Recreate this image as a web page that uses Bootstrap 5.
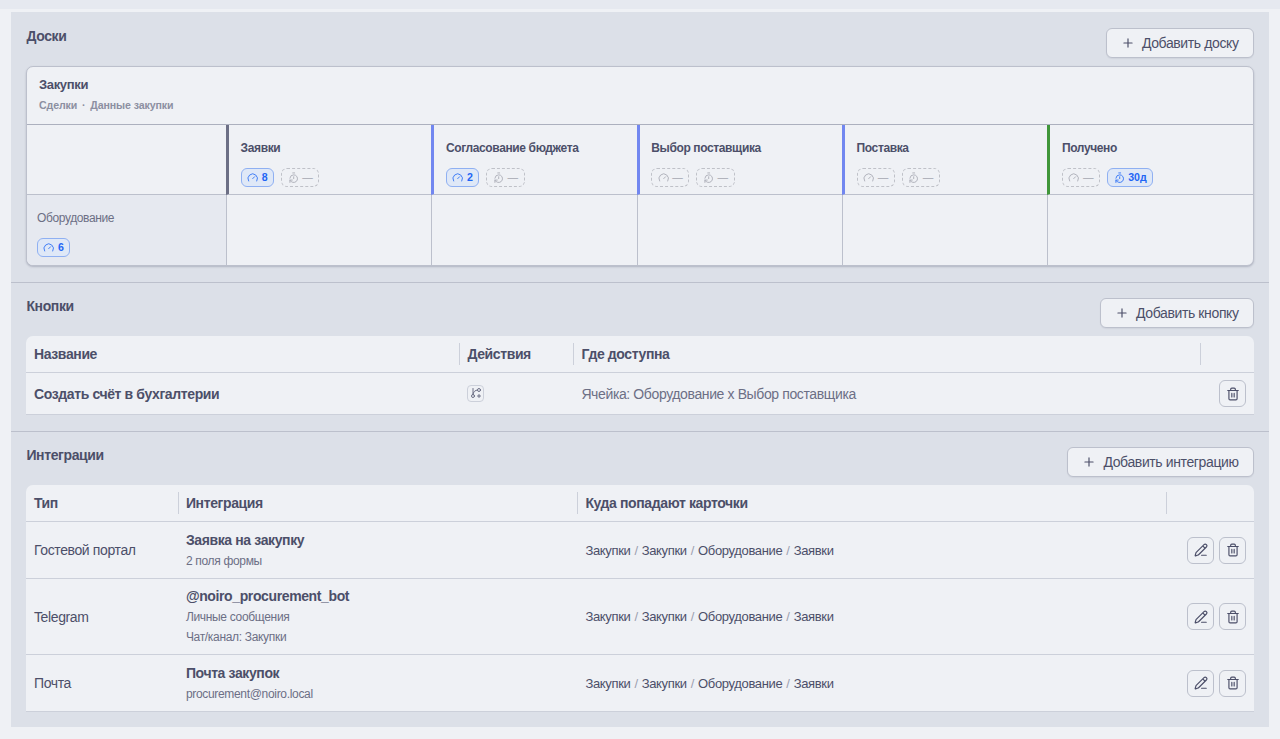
<!DOCTYPE html>
<html lang="ru">
<head>
<meta charset="utf-8">
<meta name="viewport" content="width=device-width, initial-scale=1">
<title>Процесс закупок</title>
<link href="https://cdn.jsdelivr.net/npm/bootstrap@5.3.0/dist/css/bootstrap.min.css" rel="stylesheet">
<style>
:root{--base:#eff1f5;--mantle:#e6e9f0;--crust:#dce0e8;--ink:#4c4f69;--sub:#6c6f85;--dim:#8c8fa1;--line:#bcc0cc;--blue:#1e66f5}
body{background:var(--base);color:var(--ink);font-family:"Liberation Sans",Arial,sans-serif;font-size:14px;letter-spacing:-.38px;line-height:20px;overflow:hidden}
svg{fill:none;stroke:currentColor;stroke-width:2;stroke-linecap:round;stroke-linejoin:round;flex:none;display:block}
.topstrip{height:9px;background:var(--mantle);margin-bottom:3px}
.panel{margin:0 11px;background:var(--crust)}
.block{padding:15px 15.4px 16px;border-bottom:1px solid var(--line)}
.block:first-child{padding-top:16px}
.block:last-child{border-bottom:0;padding-bottom:15px}
.block-head{height:30px;margin-bottom:8px}
.block-head h2{font-size:14px;line-height:16px;font-weight:700;margin:0}
.btn-add{--bs-btn-color:var(--ink);--bs-btn-bg:var(--base);--bs-btn-border-color:var(--line);--bs-btn-line-height:20px;--bs-btn-padding-x:14px;--bs-btn-padding-y:0;--bs-btn-border-radius:6px;--bs-btn-font-size:14px;letter-spacing:-.38px;height:30px;gap:7px;box-shadow:0 1px 1px rgba(76,79,105,.08)}
.board{height:200px;border:1px solid var(--line);border-radius:7px;background:var(--base);box-shadow:0 1px 2px rgba(76,79,105,.3);overflow:hidden}
.board-head{height:57px;padding:8px 11.6px 0;font-weight:700}
.board-head .t1{font-size:13px;letter-spacing:-.33px;line-height:20px}
.board-head .t2{font-size:10.6px;letter-spacing:-.1px;line-height:21px;color:var(--dim);gap:4.8px}
.stages{display:grid;grid-template-columns:198.6px repeat(5,1fr);grid-template-rows:70px 70px;border-top:1px solid #acb0be}
.stages>div{border-left:1px solid var(--line);padding:14px 0 0 9.6px;font-size:12px;letter-spacing:-.37px;line-height:18px}
.stages>div:nth-child(-n+6){border-bottom:1px solid var(--line)}
.stages>.stg{border-left:3px solid var(--c);padding-left:11.6px;font-weight:700}
.stages>.corner{border-left:0}
.stages>.lane{background:var(--mantle);color:var(--sub);border-left:0}
.chips{gap:7px;margin-top:11px;letter-spacing:0}
.chip{height:19px;border:1px solid #8fb0f2;border-radius:6px;background:#dfe8f7;color:var(--blue);font-size:10.6px;line-height:17px;font-weight:700;padding:0 5.5px;gap:3.2px}
.chip svg{width:11.4px;height:11.4px;opacity:.85}
.chip.off{border:1px dashed #bfc1c8;background:transparent;color:#a3a5b0;font-weight:400}
.grid-table{table-layout:fixed;width:100%;background:var(--base);border-radius:7px 7px 0 0;border-collapse:separate;border-spacing:0}
.grid-table th,.grid-table td{padding:0 7.6px 0 8px;border-bottom:1px solid #ccd0da;vertical-align:middle}
.grid-table th:first-child,.grid-table td:first-child{padding-left:7.6px}
.grid-table th{height:37px;font-weight:700;line-height:20px;background:linear-gradient(#ccd0da,#ccd0da) no-repeat left 7px/1px 22px}
.grid-table th:first-child{background:none}
.bt td{height:42px}
.btn-act{width:27px;height:27px;border:1px solid var(--line);border-radius:6px;background:transparent;color:var(--ink);padding:0}
.flow-ico{width:17px;height:17px;border:1px solid #ccd0da;border-radius:4px;color:var(--sub);margin-top:-1px}
.acts{gap:5px}
.lead-line{font-weight:700;line-height:21px}
.note{font-size:12px;letter-spacing:-.32px;line-height:20px;color:var(--sub)}
.way{font-size:13px;letter-spacing:-.34px;gap:4px;padding-top:1px}
.way i{font-style:normal;color:#9ca0b0}
</style>
</head>
<body>
<svg width="0" height="0" class="position-absolute">
<symbol id="plus" viewBox="0 0 24 24"><path d="M12 5v14M5 12h14"/></symbol>
<symbol id="gauge" viewBox="0 0 24 24"><path d="M12 14l4-4M3.340 19a10 10 0 1 1 17.320 0"/></symbol>
<symbol id="timer" viewBox="0 0 24 24"><path d="M10 2h4M12 14v-4M4 13a8 8 0 0 1 8-7 8 8 0 1 1-5.300 14L4 17.600M9 17H4v5"/></symbol>
<symbol id="trash" viewBox="0 0 24 24"><path d="M3 6h18M19 6v14c0 1-1 2-2 2H7c-1 0-2-1-2-2V6M8 6V4c0-1 1-2 2-2h4c1 0 2 1 2 2v2M10 11v6M14 11v6"/></symbol>
<symbol id="pen" viewBox="0 0 24 24"><path d="M13 21h8M15 5l4 4M21.174 6.812a1 1 0 0 0-3.986-3.987L3.842 16.174a2 2 0 0 0-.5.83l-1.321 4.352a.5.5 0 0 0 .623.622l4.353-1.320a2 2 0 0 0 .83-.497z"/></symbol>
<symbol id="flow" viewBox="0 0 24 24"><path d="M6 3v12M15 6a9 9 0 0 0-9 9M18 15v6M21 18h-6"/><circle cx="6" cy="18" r="3"/><circle cx="18" cy="6" r="3"/></symbol>
</svg>
<div class="topstrip"></div>
<main class="panel">
<section class="block">
<div class="block-head d-flex justify-content-between align-items-start"><h2>Доски</h2>
<button class="btn btn-add d-flex align-items-center"><svg width="14" height="14"><use href="#plus"/></svg>Добавить доску</button></div>
<div class="board">
<div class="board-head"><div class="t1">Закупки</div><div class="t2 d-flex"><span>Сделки</span><span>·</span><span>Данные закупки</span></div></div>
<div class="stages">
<div class="corner"></div>
<div class="stg" style="--c:#6c6f85">Заявки<div class="chips d-flex"><span class="chip d-flex align-items-center"><svg><use href="#gauge"/></svg>8</span><span class="chip off d-flex align-items-center"><svg><use href="#timer"/></svg>—</span></div></div>
<div class="stg" style="--c:#7287f0">Согласование бюджета<div class="chips d-flex"><span class="chip d-flex align-items-center"><svg><use href="#gauge"/></svg>2</span><span class="chip off d-flex align-items-center"><svg><use href="#timer"/></svg>—</span></div></div>
<div class="stg" style="--c:#7287f0">Выбор поставщика<div class="chips d-flex"><span class="chip off d-flex align-items-center"><svg><use href="#gauge"/></svg>—</span><span class="chip off d-flex align-items-center"><svg><use href="#timer"/></svg>—</span></div></div>
<div class="stg" style="--c:#7287f0">Поставка<div class="chips d-flex"><span class="chip off d-flex align-items-center"><svg><use href="#gauge"/></svg>—</span><span class="chip off d-flex align-items-center"><svg><use href="#timer"/></svg>—</span></div></div>
<div class="stg" style="--c:#40963a">Получено<div class="chips d-flex"><span class="chip off d-flex align-items-center"><svg><use href="#gauge"/></svg>—</span><span class="chip d-flex align-items-center"><svg><use href="#timer"/></svg>30д</span></div></div>
<div class="lane">Оборудование<div class="chips d-flex"><span class="chip d-flex align-items-center"><svg><use href="#gauge"/></svg>6</span></div></div>
<div></div><div></div><div></div><div></div><div></div>
</div>
</div>
</section>
<section class="block">
<div class="block-head d-flex justify-content-between align-items-start"><h2>Кнопки</h2>
<button class="btn btn-add d-flex align-items-center"><svg width="14" height="14"><use href="#plus"/></svg>Добавить кнопку</button></div>
<table class="grid-table bt">
<colgroup><col style="width:433px"><col style="width:114px"><col><col style="width:54px"></colgroup>
<tr><th>Название</th><th>Действия</th><th>Где доступна</th><th></th></tr>
<tr><td class="fw-bold">Создать счёт в бухгалтерии</td><td><span class="flow-ico d-flex align-items-center justify-content-center"><svg width="12" height="12"><use href="#flow"/></svg></span></td><td style="color:var(--sub)">Ячейка: Оборудование x Выбор поставщика</td><td><div class="acts d-flex justify-content-end"><button class="btn-act d-flex align-items-center justify-content-center" aria-label="Удалить"><svg width="14" height="14"><use href="#trash"/></svg></button></div></td></tr>
</table>
</section>
<section class="block">
<div class="block-head d-flex justify-content-between align-items-start"><h2>Интеграции</h2>
<button class="btn btn-add d-flex align-items-center"><svg width="14" height="14"><use href="#plus"/></svg>Добавить интеграцию</button></div>
<table class="grid-table">
<colgroup><col style="width:151.500px"><col style="width:399.500px"><col><col style="width:88px"></colgroup>
<tr><th>Тип</th><th>Интеграция</th><th>Куда попадают карточки</th><th></th></tr>
<tr style="height:57px"><td>Гостевой портал</td><td><div class="lead-line">Заявка на закупку</div><div class="note">2 поля формы</div></td><td><div class="way d-flex"><span>Закупки</span><i>/</i><span>Закупки</span><i>/</i><span>Оборудование</span><i>/</i><span>Заявки</span></div></td><td><div class="acts d-flex justify-content-end"><button class="btn-act d-flex align-items-center justify-content-center" aria-label="Изменить"><svg width="14" height="14"><use href="#pen"/></svg></button><button class="btn-act d-flex align-items-center justify-content-center" aria-label="Удалить"><svg width="14" height="14"><use href="#trash"/></svg></button></div></td></tr>
<tr style="height:76px"><td>Telegram</td><td><div class="lead-line">@noiro_procurement_bot</div><div class="note">Личные сообщения</div><div class="note">Чат/канал: Закупки</div></td><td><div class="way d-flex"><span>Закупки</span><i>/</i><span>Закупки</span><i>/</i><span>Оборудование</span><i>/</i><span>Заявки</span></div></td><td><div class="acts d-flex justify-content-end"><button class="btn-act d-flex align-items-center justify-content-center" aria-label="Изменить"><svg width="14" height="14"><use href="#pen"/></svg></button><button class="btn-act d-flex align-items-center justify-content-center" aria-label="Удалить"><svg width="14" height="14"><use href="#trash"/></svg></button></div></td></tr>
<tr style="height:57px"><td>Почта</td><td><div class="lead-line">Почта закупок</div><div class="note">procurement@noiro.local</div></td><td><div class="way d-flex"><span>Закупки</span><i>/</i><span>Закупки</span><i>/</i><span>Оборудование</span><i>/</i><span>Заявки</span></div></td><td><div class="acts d-flex justify-content-end"><button class="btn-act d-flex align-items-center justify-content-center" aria-label="Изменить"><svg width="14" height="14"><use href="#pen"/></svg></button><button class="btn-act d-flex align-items-center justify-content-center" aria-label="Удалить"><svg width="14" height="14"><use href="#trash"/></svg></button></div></td></tr>
</table>
</section>
</main>
<script src="https://cdn.jsdelivr.net/npm/bootstrap@5.3.0/dist/js/bootstrap.bundle.min.js"></script>
</body>
</html>
